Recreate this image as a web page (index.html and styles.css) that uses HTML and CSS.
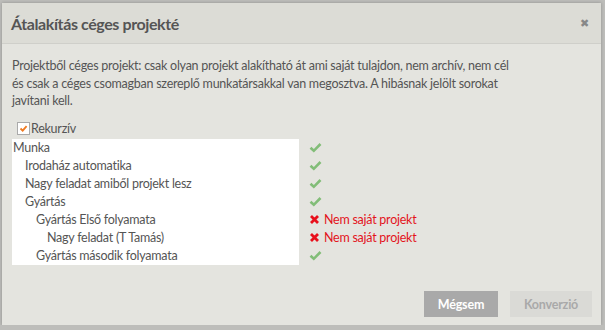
FILE: index.html
```html
<!DOCTYPE html>
<html>
    <head>
        <title>Átalakítás céges projekté</title>
        <link rel="stylesheet" href="styles.css">
    </head>
    <body>
        <div class="dialog">
            <div class="dialogHeader">
                <h1 class="dialogTitle">Átalakítás céges projekté</h1>
                <span class="closeBtn">&#10006;</span>
            </div>
            <div class="dialogBody">
                <p class="desc">Projektből céges projekt: csak olyan projekt alakítható át ami saját tulajdon, nem archív, nem cél és csak a céges csomagban szereplő munkatársakkal van megosztva. A hibásnak jelölt sorokat javítani kell.</p>
                <label class="recursive"><span class="checkBox"><svg width="9" height="9" viewBox="0 0 9 9"><path d="M1.5 4.5 L3.7 6.7 L7.6 2.2" fill="none" stroke="#f07b22" stroke-width="1.8"/></svg></span>Rekurzív</label>
                <div class="treeGrid">
                    <div class="treeRow"><div class="treeName lvl0">Munka</div><div class="treeStatus ok"></div></div>
                    <div class="treeRow"><div class="treeName lvl1">Irodaház automatika</div><div class="treeStatus ok"></div></div>
                    <div class="treeRow"><div class="treeName lvl1">Nagy feladat amiből projekt lesz</div><div class="treeStatus ok"></div></div>
                    <div class="treeRow"><div class="treeName lvl1">Gyártás</div><div class="treeStatus ok"></div></div>
                    <div class="treeRow"><div class="treeName lvl2">Gyártás Első folyamata</div><div class="treeStatus bad">Nem saját projekt</div></div>
                    <div class="treeRow"><div class="treeName lvl3">Nagy feladat (T Tamás)</div><div class="treeStatus bad">Nem saját projekt</div></div>
                    <div class="treeRow"><div class="treeName lvl2">Gyártás második folyamata</div><div class="treeStatus ok"></div></div>
                </div>
            </div>
            <div class="dialogFooter">
                <button class="btn btnCancel">Mégsem</button>
                <button class="btn btnConvert" disabled>Konverzió</button>
            </div>
        </div>

        <script>
            // status icons
            var okIcon = '<svg width="13" height="11" viewBox="0 0 13 11"><path d="M1.5 5.8 L4.8 8.8 L11.5 2" fill="none" stroke="#82bd78" stroke-width="2.6"/></svg>';
            var badIcon = '<svg width="11" height="11" viewBox="0 0 11 11"><path d="M2 2 L9 9 M9 2 L2 9" fill="none" stroke="#e8101c" stroke-width="2.8"/></svg>';

            document.querySelectorAll(".treeStatus").forEach(function (el) {
                var icon = el.classList.contains("ok") ? okIcon : badIcon;
                el.innerHTML = '<span class="statusIcon">' + icon + '</span>' + el.innerHTML;
            });
        </script>
    </body>
</html>
```

FILE: styles.css
```css
body, html {
    margin: 0;
    padding: 0;
}

body {
    background: #bdbdba;
    font-family: 'Lato', sans-serif;
    color: #555;
}

.dialog {
    margin: 3px 4px 0 2px;
    height: 322px;
    background: #e4e4df;
    display: flex;
    flex-direction: column;
    box-shadow: 0 0 3px rgba(0, 0, 0, 0.25);
}

.dialogHeader {
    height: 40px;
    background: #dcdcd6;
    border-bottom: 1px solid #cfcfca;
    display: flex;
    align-items: center;
    padding: 0 12px 0 9px;
}

.dialogTitle {
    flex: 1;
    margin: 0;
    font-size: 16px;
    letter-spacing: -0.4px;
    font-weight: bold;
    color: #555;
}

.closeBtn {
    color: #888;
    font-size: 11px;
}

.dialogBody {
    flex: 1;
    padding: 13px 11px 0 10px;
}

.desc {
    margin: 0;
    max-width: 502px;
    font-size: 12.5px;
    letter-spacing: -0.25px;
    line-height: 17.5px;
}

.recursive {
    display: flex;
    align-items: center;
    margin: 10px 0 1px 5px;
    font-size: 12.5px;
    letter-spacing: -0.25px;
    height: 18px;
}

.checkBox {
    width: 11px;
    height: 11px;
    background: white;
    border: 1px solid #aaa;
    display: flex;
    align-items: center;
    justify-content: center;
    margin-right: 1px;
}

.treeGrid {
    display: flex;
    flex-direction: column;
}

.treeRow {
    display: flex;
    height: 18px;
    font-size: 12.5px;
    letter-spacing: -0.25px;
}

.treeName {
    background: white;
    line-height: 18px;
    color: #555;
}

.lvl0 { padding-left: 1px; width: 286px; }
.lvl1 { padding-left: 13px; width: 274px; }
.lvl2 { padding-left: 24px; width: 263px; }
.lvl3 { padding-left: 35px; width: 252px; }

.treeStatus {
    display: flex;
    align-items: center;
    padding-left: 10px;
    color: #e3141d;
}

.statusIcon {
    display: flex;
    margin-right: 4px;
}

.dialogFooter {
    display: flex;
    justify-content: flex-end;
    gap: 12px;
    padding: 0 9px 8px 0;
}

.btn {
    height: 26px;
    border: none;
    font-family: 'Lato', sans-serif;
    font-size: 12.5px;
    letter-spacing: -0.2px;
    font-weight: bold;
    padding: 0;
}

.btnCancel {
    background: #a9a9a9;
    color: white;
    width: 74px;
}

.btnConvert {
    background: #dadad6;
    color: #a9a9a9;
    width: 82px;
}
```
